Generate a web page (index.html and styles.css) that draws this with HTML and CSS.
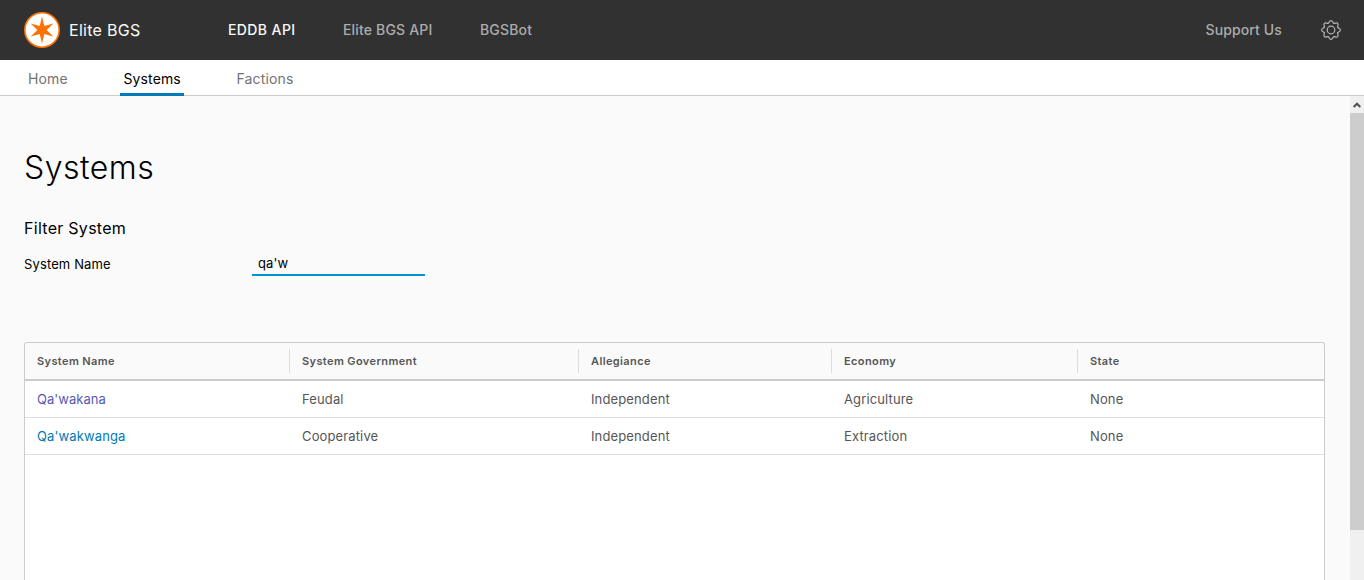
FILE: index.html
```html
<!DOCTYPE html>
<html lang="en">
<head>
<meta charset="utf-8">
<title>Elite BGS</title>
<link rel="stylesheet" href="styles.css">
</head>
<body>
<header class="header">
  <a class="brand">
    <svg class="logo" viewBox="0 0 36 36"><circle cx="18" cy="18" r="17.2" fill="#fff" stroke="#ff7100" stroke-width="1.6"/><path fill="#ff7100" d="M18 4.6L20.3 14L29.4 11.6L22.6 18L29.4 24.4L20.3 22L18 31.4L15.7 22L6.6 24.4L13.4 18L6.6 11.6L15.7 14z"/></svg>
    <span class="brand-name">Elite BGS</span>
  </a>
  <nav class="main-nav">
    <a class="nav-link active">EDDB API</a>
    <a class="nav-link">Elite BGS API</a>
    <a class="nav-link">BGSBot</a>
  </nav>
  <div class="actions">
    <a class="nav-link support">Support Us</a>
    <svg class="gear" viewBox="0 0 20 20" fill="none" stroke="#b5b5b5" stroke-width="1.2" stroke-linecap="round">
      <circle cx="10" cy="10" r="3.8"/>
      <path id="tooth" d="M7.21 3.26C8.4 2.77 8.2.6 10 .6s1.6 2.17 2.79 2.66"/>
      <use href="#tooth" transform="rotate(45 10 10)"/>
      <use href="#tooth" transform="rotate(90 10 10)"/>
      <use href="#tooth" transform="rotate(135 10 10)"/>
      <use href="#tooth" transform="rotate(180 10 10)"/>
      <use href="#tooth" transform="rotate(225 10 10)"/>
      <use href="#tooth" transform="rotate(270 10 10)"/>
      <use href="#tooth" transform="rotate(315 10 10)"/>
    </svg>
  </div>
</header>
<nav class="subnav">
  <a class="tab">Home</a>
  <a class="tab selected">Systems</a>
  <a class="tab">Factions</a>
</nav>
<div class="body">
  <main class="content">
    <h1 class="title">Systems</h1>
    <h2 class="subtitle">Filter System</h2>
    <div class="form-row">
      <label class="label">System Name</label>
      <span class="input">qa'w</span>
    </div>
    <section class="grid">
      <div class="row head"><span>System Name</span><span>System Government</span><span>Allegiance</span><span>Economy</span><span>State</span></div>
      <div class="row"><a class="link visited">Qa'wakana</a><span>Feudal</span><span>Independent</span><span>Agriculture</span><span>None</span></div>
      <div class="row"><a class="link">Qa'wakwanga</a><span>Cooperative</span><span>Independent</span><span>Extraction</span><span>None</span></div>
    </section>
  </main>
  <div class="scrollbar"><svg class="arrow" viewBox="0 0 14 17"><path d="M3.7 11L7 7.7l3.3 3.3" fill="none" stroke="#505050" stroke-width="2"/></svg><div class="thumb"></div></div>
</div>
</body>
</html>
```
FILE: styles.css
```css
* { box-sizing: border-box; }
body {
  margin: 0;
  height: 580px;
  display: flex;
  flex-direction: column;
  overflow: hidden;
  background: #fafafa;
  color: #000;
  font: 13px/24px Inter, "Open Sans", sans-serif;
  letter-spacing: 0.13px;
}
.header {
  flex: 0 0 60px;
  display: flex;
  align-items: center;
  padding: 0 23px 0 24px;
  background: #313131;
}
.brand { display: flex; align-items: center; gap: 9px; width: 180px; }
.logo { width: 36px; height: 36px; }
.brand-name { color: #fafafa; font-size: 16px; letter-spacing: 0.28px; }
.main-nav { display: flex; gap: 47.5px; padding-left: 24px; }
.nav-link { font-size: 14px; font-weight: 500; letter-spacing: 0.17px; color: #acacac; white-space: nowrap; }
.nav-link.active { color: #fafafa; letter-spacing: 0.4px; }
.nav-link.support { letter-spacing: 0.12px; }
.actions { margin-left: auto; display: flex; align-items: center; gap: 39px; }
.gear { width: 20px; height: 20px; }
.subnav {
  flex: 0 0 36px;
  display: flex;
  gap: 49.7px;
  padding-left: 25px;
  background: #fff;
  border-bottom: 1px solid #ccc;
}
.tab { height: 36px; margin-bottom: -1px; padding: 0 3px; font-size: 14px; line-height: 38px; color: #737373; }
.tab.selected { color: #000; border-bottom: 3px solid #0079b8; }
.body { flex: 1; display: flex; min-height: 0; }
.content { flex: 1; padding: 48px 25px 0 24px; display: flex; flex-direction: column; }
.title { margin: 0; font-size: 32px; line-height: 48px; font-weight: 300; letter-spacing: 0.5px; }
.subtitle { margin: 24px 0 0; font-size: 16px; line-height: 24px; font-weight: 400; letter-spacing: 0.28px; }
.form-row { display: flex; margin-top: 12px; height: 24px; }
.label { width: 228px; line-height: 25px; }
.input { width: 173px; height: 24px; padding-left: 6px; line-height: 22px; border-bottom: 2px solid #0094d2; }
.grid {
  flex: 1;
  margin-top: 66px;
  background: #fff;
  border: 1px solid #ccc;
  border-bottom: 0;
  border-radius: 3px 3px 0 0;
}
.row {
  display: grid;
  grid-template-columns: 265px 289px 253px 246px 1fr;
  align-items: center;
  height: 37px;
  border-bottom: 1px solid #ddd;
  color: #565656;
}
.row > * { padding-left: 12px; }
.head {
  height: 38px;
  border-bottom: 2px solid #ccc;
  border-radius: 3px 3px 0 0;
  background: #fafafa;
  font-size: 11px;
  font-weight: 600;
  letter-spacing: 0.39px;
}
.head > * + * { border-left: 1px solid #ddd; margin-left: -1px; }
.link { color: #0079b8; }
.link.visited { color: #5659b8; letter-spacing: 0.05px; }
.scrollbar { width: 14px; background: #f0f0f0; }
.arrow { display: block; width: 14px; height: 17px; }
.thumb { height: 417px; background: #cdcdcd; }
```
